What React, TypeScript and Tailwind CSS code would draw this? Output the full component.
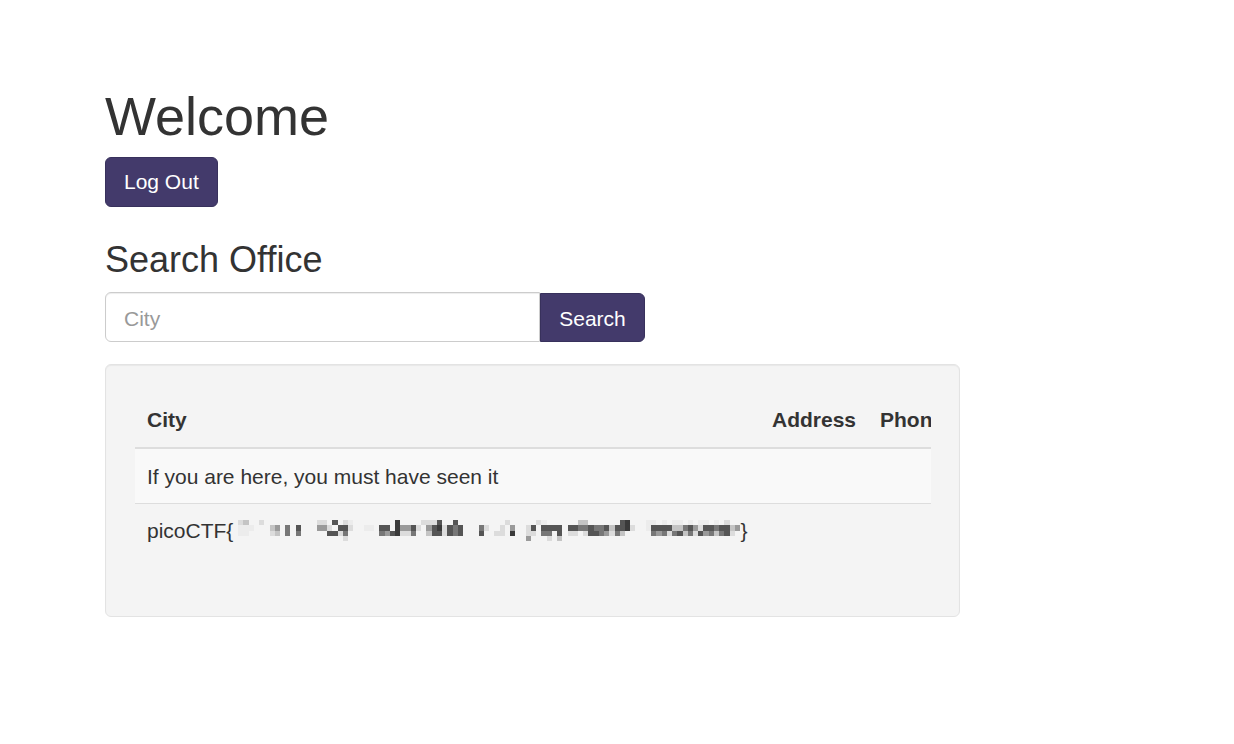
import React from "react"

// gray levels used by the pixelated part of the flag
const shades = ["", "#ececec", "#dcdcdc", "#c4c4c4", "#9a9a9a", "#777777", "#555555", "#3a3a3a"]

const mosaicRows = [
  "1:2 2:3 5:2 16:2 17:2 19:6 21:2 22:1 31:7 36:2 37:2 38:2 39:6 42:6 52:2 58:2 59:1 66:3 67:3 74:6 75:7 79:1 80:1 82:1 84:1 85:1 87:1 89:1 90:1 92:1 94:2",
  "1:1 2:1 3:1 7:3 8:4 10:5 12:6 16:4 17:4 18:2 20:6 21:6 22:2 25:1 26:1 28:6 29:6 31:7 32:4 33:4 34:6 35:2 37:4 38:6 39:7 40:2 41:6 42:5 43:6 47:5 48:2 51:2 53:4 56:2 57:6 59:6 60:6 61:6 62:6 64:6 65:6 66:5 67:5 68:6 69:5 70:5 71:6 72:3 73:6 74:6 75:7 76:2 79:1 80:6 81:6 82:6 83:6 84:3 85:3 86:5 87:6 88:4 89:2 90:6 91:6 92:5 93:6 94:6 95:3 96:4",
  "1:1 2:1 7:2 8:3 10:5 12:5 18:6 19:6 20:2 21:5 28:5 29:4 30:6 31:7 32:2 33:2 34:5 37:3 38:6 39:6 40:2 41:6 42:5 43:6 47:6 50:2 51:2 53:7 56:2 57:2 59:5 60:5 62:6 64:2 65:2 67:2 68:6 69:6 70:5 71:4 72:2 73:5 74:3 80:5 81:4 82:5 83:2 84:5 85:6 86:3 87:5 88:2 89:6 90:4 91:5 92:3 93:5 94:6 95:2",
  "21:2 56:4 60:2 62:3",
]

function Mosaic() {
  return (
    <svg
      viewBox="0 0 97 4"
      width={507}
      height={21}
      preserveAspectRatio="none"
      shapeRendering="crispEdges"
      className="mt-[4px] shrink-0"
    >
      {mosaicRows.map((row, y) =>
        row.split(" ").map((cell) => {
          const [c, v] = cell.split(":").map(Number)
          return <rect key={`${y}-${c}`} x={c} y={y} width={1} height={1} fill={shades[v]} />
        })
      )}
    </svg>
  )
}

export default function App() {
  return (
    <div className="min-h-[744px] bg-white pl-[105px] pt-[87px] text-[21px] leading-[30px] text-[#333] font-['Liberation_Sans',Arial,sans-serif]">
      <h1 className="text-[54px] leading-[59px]">Welcome</h1>
      <button className="mt-[11px] h-[50px] rounded-[6px] border border-[#38315c] bg-[#433a6b] px-[18px] text-white">
        Log Out
      </button>

      <h3 className="mt-[33px] text-[36px] leading-[40px]">Search Office</h3>
      <div className="mt-[12px] flex w-[540px]">
        <input
          placeholder="City"
          className="h-[50px] flex-1 rounded-l-[6px] border border-[#ccc] px-[18px] pt-[3px] shadow-[inset_0_1px_1px_rgba(0,0,0,0.075)] outline-none placeholder:text-[#999]"
        />
        <button className="mt-[1px] h-[49px] w-[105px] rounded-r-[6px] border border-[#38315c] bg-[#433a6b] pt-[2px] text-white">
          Search
        </button>
      </div>

      <div className="mt-[22px] w-[855px] rounded-[6px] border border-[#e3e3e3] bg-[#f4f4f4] pt-[28px] pr-[28px] pb-[28px] pl-[29px] shadow-[inset_0_1px_1px_rgba(0,0,0,0.05)]">
        <div className="mb-[30px] w-[796px] overflow-hidden">
          <div className="grid w-[821px] grid-cols-[625px_108px_88px] border-b-2 border-[#ddd] font-bold">
            <div className="p-[12px]">City</div>
            <div className="p-[12px]">Address</div>
            <div className="p-[12px] whitespace-nowrap">Phone</div>
          </div>
          <div className="bg-[#f9f9f9] px-[12px] pt-[13px] pb-[11px]">If you are here, you must have seen it</div>
          <div className="flex border-t border-[#ddd] p-[12px]">
            <span>picoCTF{"{"}</span>
            <Mosaic />
            <span>{"}"}</span>
          </div>
        </div>
      </div>
    </div>
  )
}
